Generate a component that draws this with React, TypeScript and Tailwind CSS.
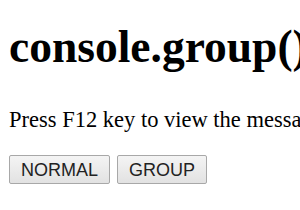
import React from "react";

const btn =
  "h-[29px] px-[11px] border border-[#a8a8a8] rounded-[2px] bg-gradient-to-b from-[#f4f4f4] to-[#e2e2e2] text-[18px] leading-[20px] text-[#222] font-['Liberation_Sans',Arial,sans-serif]";

export default function App() {
  return (
    <div className="bg-white w-[300px] h-[210px] overflow-hidden pl-[9px] text-black">
      <h1 className="pt-[20px] text-[45.5px] leading-[53px] font-bold whitespace-nowrap font-['Liberation_Serif','Times_New_Roman',serif]">
        console.group()
      </h1>
      <p className="mt-[34px] text-[22.5px] leading-[25px] whitespace-nowrap font-['Liberation_Serif','Times_New_Roman',serif]">
        Press F12 key to view the message in the console.
      </p>
      <div className="mt-[23px] flex gap-[7px]">
        <button className={btn}>NORMAL</button>
        <button className={btn}>GROUP</button>
      </div>
    </div>
  );
}
